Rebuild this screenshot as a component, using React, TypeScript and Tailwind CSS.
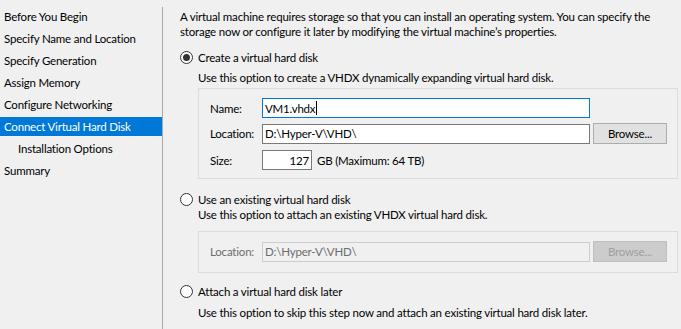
const navItems = [
  { label: 'Before You Begin' },
  { label: 'Specify Name and Location' },
  { label: 'Specify Generation' },
  { label: 'Assign Memory' },
  { label: 'Configure Networking' },
  { label: 'Connect Virtual Hard Disk', active: true },
  { label: 'Installation Options', sub: true },
  { label: 'Summary' },
]

function Radio({ checked }: { checked?: boolean }) {
  return (
    <span className="flex h-[13px] w-[13px] shrink-0 items-center justify-center rounded-full border border-[#333333] bg-white">
      {checked && <span className="h-[7px] w-[7px] rounded-full bg-[#333333]" />}
    </span>
  )
}

function TextBox({
  value,
  className = '',
  focused,
  disabled,
  right,
  caret,
}: {
  value: string
  className?: string
  focused?: boolean
  disabled?: boolean
  right?: boolean
  caret?: boolean
}) {
  const border = focused
    ? 'border-[#0078d7] bg-white'
    : disabled
      ? 'border-[#cccccc] bg-[#f0f0f0] text-[#6d6d6d]'
      : 'border-[#7a7a7a] bg-white'
  return (
    <div
      className={`flex h-[20px] items-center border px-[2px] ${border} ${right ? 'justify-end' : ''} ${className}`}
    >
      <span>{value}</span>
      {caret && <span className="ml-px h-[14px] w-px bg-black" />}
    </div>
  )
}

function Button({ label, disabled }: { label: string; disabled?: boolean }) {
  return (
    <div
      className={`flex h-[21px] w-[74px] items-center justify-center border ${
        disabled ? 'border-[#bfbfbf] bg-[#cccccc] text-[#a0a0a0]' : 'border-[#adadad] bg-[#e1e1e1] text-black'
      }`}
    >
      {label}
    </div>
  )
}

export default function App() {
  return (
    <div
      className="flex h-[329px] w-[681px] overflow-hidden bg-[#f0f0f0] text-[11.5px] leading-[15px] tracking-[-0.2px] text-black"
      style={{ fontFamily: 'Lato, sans-serif' }}
    >
      <nav className="flex w-[162px] shrink-0 flex-col pt-[7px]">
        {navItems.map((item) => (
          <div
            key={item.label}
            className={`mb-[3px] flex h-[19px] items-center whitespace-nowrap ${item.sub ? 'pl-[18px]' : 'pl-[4px]'} ${
              item.active ? 'bg-[#0078d7] text-white' : ''
            }`}
          >
            {item.label}
          </div>
        ))}
      </nav>
      <div className="mt-[7px] w-px shrink-0 bg-[#a9a9a9]" />
      <main className="flex flex-1 flex-col whitespace-nowrap pl-[17px] pt-[9px]">
        <p>
          A virtual machine requires storage so that you can install an operating system. You can specify the
          <br />
          storage now or configure it later by modifying the virtual machine’s properties.
        </p>

        <label className="mt-[10px] flex h-[16px] items-center gap-[5px]">
          <Radio checked />
          <span>Create a virtual hard disk</span>
        </label>
        <p className="ml-[18px] mt-[5px] h-[15px]">Use this option to create a VHDX dynamically expanding virtual hard disk.</p>
        <div className="ml-[18px] mr-[3px] mt-[3px] flex flex-col border border-[#dcdcdc] pb-[8px] pl-[11px] pt-[9px]">
          <div className="flex items-center">
            <span className="w-[52px]">Name:</span>
            <TextBox value="VM1.vhdx" focused caret className="w-[328px]" />
          </div>
          <div className="mt-[5px] flex items-center">
            <span className="w-[52px]">Location:</span>
            <TextBox value="D:\Hyper-V\VHD\" className="w-[328px]" />
            <div className="ml-[3px]">
              <Button label="Browse..." />
            </div>
          </div>
          <div className="mt-[6px] flex items-center">
            <span className="w-[52px]">Size:</span>
            <TextBox value="127" right className="w-[50px]" />
            <span className="ml-[5px]">GB (Maximum: 64 TB)</span>
          </div>
        </div>

        <label className="mt-[12px] flex h-[16px] items-center gap-[5px]">
          <Radio />
          <span>Use an existing virtual hard disk</span>
        </label>
        <p className="ml-[18px] mt-0 h-[15px]">Use this option to attach an existing VHDX virtual hard disk.</p>
        <div className="ml-[18px] mr-[3px] mt-[9px] flex items-center border border-[#dcdcdc] pb-[10px] pl-[11px] pt-[9px]">
          <span className="w-[52px] text-[#6d6d6d]">Location:</span>
          <TextBox value="D:\Hyper-V\VHD\" disabled className="w-[328px]" />
          <div className="ml-[3px]">
            <Button label="Browse..." disabled />
          </div>
        </div>

        <label className="mt-[10px] flex h-[16px] items-center gap-[5px]">
          <Radio />
          <span>Attach a virtual hard disk later</span>
        </label>
        <p className="ml-[18px] mt-[6px] h-[15px]">
          Use this option to skip this step now and attach an existing virtual hard disk later.
        </p>
      </main>
    </div>
  )
}
